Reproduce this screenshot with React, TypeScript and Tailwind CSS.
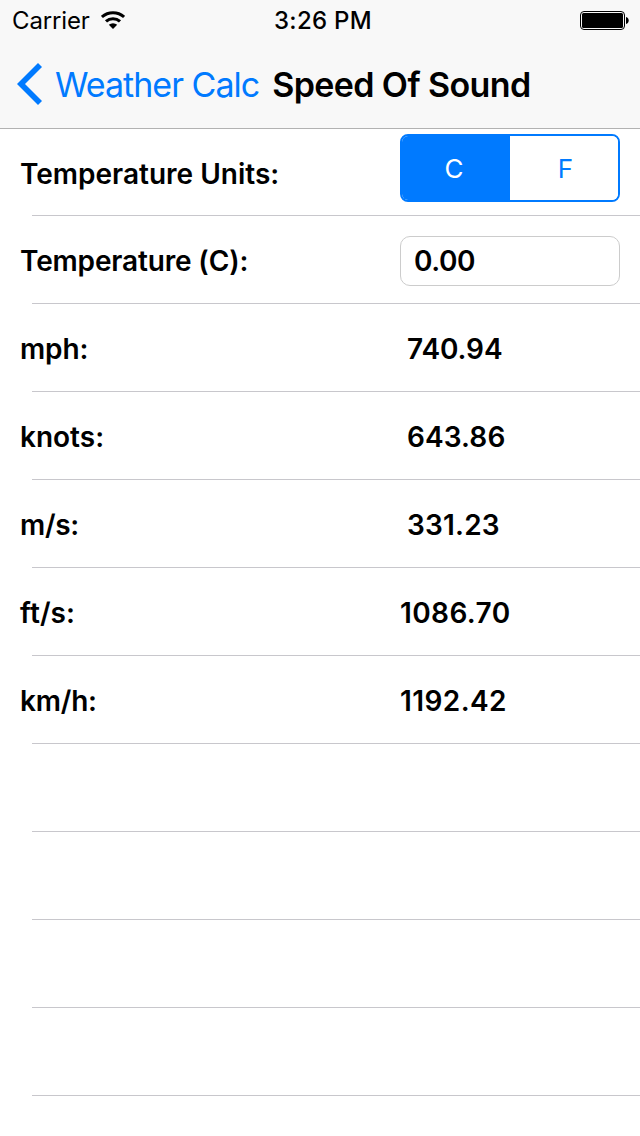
const results = [
  { label: "mph:", value: "740.94", labelClass: "tracking-[-0.15px]", valueClass: "pl-[7px] tracking-[-0.1px]" },
  { label: "knots:", value: "643.86", labelClass: "tracking-[0px]", valueClass: "pl-[7px] tracking-[0.1px]" },
  { label: "m/s:", value: "331.23", labelClass: "tracking-[-0.3px]", valueClass: "pl-[7px] tracking-[0.2px]" },
  { label: "ft/s:", value: "1086.70", labelClass: "tracking-[0.1px]", valueClass: "tracking-[0.4px]" },
  { label: "km/h:", value: "1192.42", labelClass: "tracking-[-0.2px]", valueClass: "tracking-[0.4px]" },
];

const emptyRows = [0, 1, 2, 3];

function StatusBar() {
  return (
    <div className="flex h-10 items-center pl-3 pr-[11px] text-[24px] leading-10">
      <div className="flex flex-1 items-center gap-[11px]">
        <span className="pt-0.5 tracking-[-0.15px]">Carrier</span>
        <svg width="24" height="18" viewBox="0 0 24 18" fill="none" stroke="#000" strokeWidth="3.1">
          <path d="M.9 5.9a16.8 16.8 0 0 1 22.2 0" />
          <path d="M5 10.4a10.4 10.4 0 0 1 14 0" />
          <path d="M12 18 7.8 13.8a6.2 6.2 0 0 1 8.4 0z" fill="#000" stroke="none" />
        </svg>
      </div>
      <span className="pl-[5px] pt-0.5 font-medium tracking-[0.3px]">3:26 PM</span>
      <div className="flex flex-1 justify-end pt-px">
        <svg width="49" height="19" viewBox="0 0 49 19">
          <rect x="0.5" y="0.5" width="44" height="18" rx="3.5" fill="none" stroke="#000" />
          <rect x="2" y="2" width="41" height="15" rx="1.5" />
          <path d="M46 6c3.6 .8 3.6 6.2 0 7z" />
        </svg>
      </div>
    </div>
  );
}

function NavBar() {
  return (
    <div className="flex h-[88px] items-center pl-[17px]">
      <svg width="25" height="42" viewBox="0 0 25 42" fill="#007aff">
        <path d="M21 0 25 4 8 21l17 17-4 4L0 21z" />
      </svg>
      <span className="ml-[13px] text-[34px] tracking-[-0.98px] text-[#007aff]">Weather Calc</span>
      <h1 className="ml-[13px] text-[34px] font-semibold tracking-[-0.62px]">Speed Of Sound</h1>
    </div>
  );
}

export default function App() {
  return (
    <div className="h-[1136px] w-[640px] overflow-hidden whitespace-nowrap bg-white font-['Inter',sans-serif] text-black">
      <header className="h-[129px] border-b border-[#b2b2b2] bg-[#f8f8f8]">
        <StatusBar />
        <NavBar />
      </header>
      <main className="text-[28px] font-semibold">
        <div className="flex h-[86px] pl-5">
          <span className="w-[380px] pt-6">Temperature Units:</span>
          <div className="mt-[5px] flex h-[68px] w-[220px] overflow-hidden rounded-[8px] border-2 border-[#007aff] text-[26px] font-normal">
            <button type="button" className="w-[108px] bg-[#007aff] pr-1 text-white">C</button>
            <button type="button" className="flex-1 bg-white pl-[3px] text-[#007aff]">F</button>
          </div>
        </div>
        <div className="ml-8 h-px bg-[#c8c7cc]" />
        <div className="flex h-[87px] items-center pl-5 pt-[3px]">
          <span className="w-[380px] tracking-[-0.15px]">Temperature (C):</span>
          <div className="flex h-[50px] w-[220px] items-center rounded-[10px] border border-[#cccccc] pl-[13px] tracking-[-0.4px]">0.00</div>
        </div>
        <div className="ml-8 h-px bg-[#c8c7cc]" />
        {results.map((row) => (
          <div key={row.label}>
            <div className="flex h-[87px] items-center pl-5 pt-[3px]">
              <span className={`w-[380px] ${row.labelClass}`}>{row.label}</span>
              <span className={row.valueClass}>{row.value}</span>
            </div>
            <div className="ml-8 h-px bg-[#c8c7cc]" />
          </div>
        ))}
        {emptyRows.map((row) => (
          <div key={row} className="ml-8 h-[88px] border-b border-[#c8c7cc]" />
        ))}
      </main>
    </div>
  );
}
